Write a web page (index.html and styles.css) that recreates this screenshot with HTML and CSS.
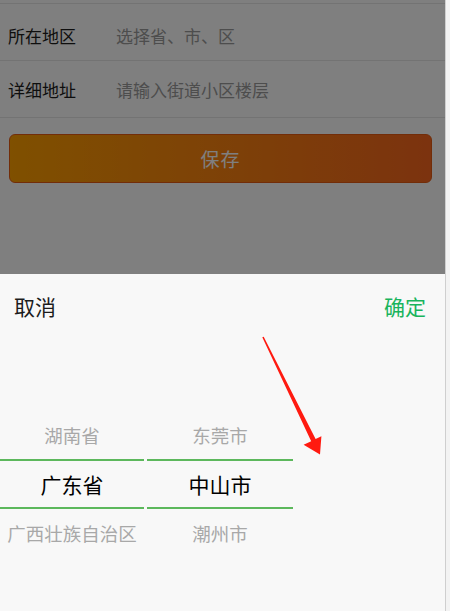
FILE: index.html
```html
<!DOCTYPE html>
<html lang="zh-CN">
<head>
  <meta charset="utf-8" />
  <meta name="viewport" content="width=device-width, initial-scale=1" />
  <title>收货地址</title>
  <link rel="stylesheet" href="styles.css">
</head>
<body>
<div class="addr-page">
  <div class="addr-form">
    <div class="addr-form--top"></div>
    <div class="addr-row addr-row--first">
      <span class="addr-label">所在地区</span>
      <span class="addr-hint">选择省、市、区</span>
    </div>
    <div class="addr-row">
      <span class="addr-label">详细地址</span>
      <span class="addr-hint">请输入街道小区楼层</span>
    </div>
    <button class="addr-save" type="button">保存</button>
  </div>

  <div class="addr-mask"></div>

  <div class="addr-sheet">
    <div class="addr-sheet--head">
      <span class="addr-cancel">取消</span>
      <span class="addr-ok">确定</span>
    </div>
    <div class="addr-picker">
      <div class="addr-col">
        <div class="addr-item"></div>
        <div class="addr-item">湖南省</div>
        <div class="addr-item addr-item--on">广东省</div>
        <div class="addr-item">广西壮族自治区</div>
        <div class="addr-item"></div>
      </div>
      <div class="addr-col">
        <div class="addr-item"></div>
        <div class="addr-item">东莞市</div>
        <div class="addr-item addr-item--on">中山市</div>
        <div class="addr-item">潮州市</div>
        <div class="addr-item"></div>
      </div>
      <div class="addr-col addr-col--empty"></div>
    </div>
  </div>

  <svg class="addr-arrow" width="450" height="611" viewBox="0 0 450 611">
    <polygon fill="#ff1a10" points="262.3,337.3 263.7,336.7 315.6,439 321.4,436.3 320,454.5 303.6,444.8 311.2,441.2"/>
  </svg>
</div>
</body>
</html>
```

FILE: styles.css
```css
:root {
  --line: #e6e6e6;
  --text: #1c1c1c;
  --hint: #9a9a9a;
  --green: #19b45c;
  --pick-line: #5cb85c;
}
html {
  background: #f3f3f3;
}
body {
  margin: 0;
  padding: 0;
  font-family: "Noto Sans CJK SC", "Noto Sans", sans-serif;
}
.addr-page {
  position: relative;
  width: 445px;
  height: 611px;
  overflow: hidden;
  background: #fff;
  border-right: 1px solid #cfcfcf;
}
.addr-form--top {
  height: 3px;
  border-bottom: 1px solid var(--line);
}
.addr-row {
  display: flex;
  align-items: center;
  height: 56px;
  padding-left: 8px;
  border-bottom: 1px solid var(--line);
  font-size: 17px;
}
.addr-row--first {
  height: 50px;
  padding-top: 6px;
}
.addr-label {
  width: 108px;
  color: var(--text);
}
.addr-hint {
  color: var(--hint);
}
.addr-save {
  display: block;
  width: 423px;
  height: 49px;
  margin: 16px 0 0 9px;
  padding: 0;
  border: 1px solid #e45a12;
  border-radius: 6px;
  background: linear-gradient(to right, #ffa000, #f8661e);
  color: #fff;
  font-family: inherit;
  font-size: 19px;
  letter-spacing: 1px;
}
.addr-mask {
  position: absolute;
  inset: 0;
  background: rgba(0, 0, 0, 0.5);
}
.addr-sheet {
  position: absolute;
  left: 0;
  right: 0;
  bottom: 0;
  height: 337px;
  background: #f8f8f8;
}
.addr-sheet--head {
  display: flex;
  justify-content: space-between;
  align-items: center;
  height: 64px;
  padding: 0 19px 0 14px;
  font-size: 21px;
}
.addr-cancel {
  color: var(--text);
}
.addr-ok {
  color: var(--green);
}
.addr-picker {
  display: grid;
  grid-template-columns: 144px 146px 1fr;
  column-gap: 3px;
  margin-top: 25px;
}
.addr-item {
  display: flex;
  align-items: center;
  justify-content: center;
  height: 48px;
  font-size: 18.5px;
  color: #a8a8a8;
  white-space: nowrap;
}
.addr-item--on {
  border-top: 2px solid var(--pick-line);
  border-bottom: 2px solid var(--pick-line);
  height: 46px;
  font-size: 21px;
  color: #000;
}
.addr-arrow {
  position: absolute;
  left: 0;
  top: 0;
}
```
